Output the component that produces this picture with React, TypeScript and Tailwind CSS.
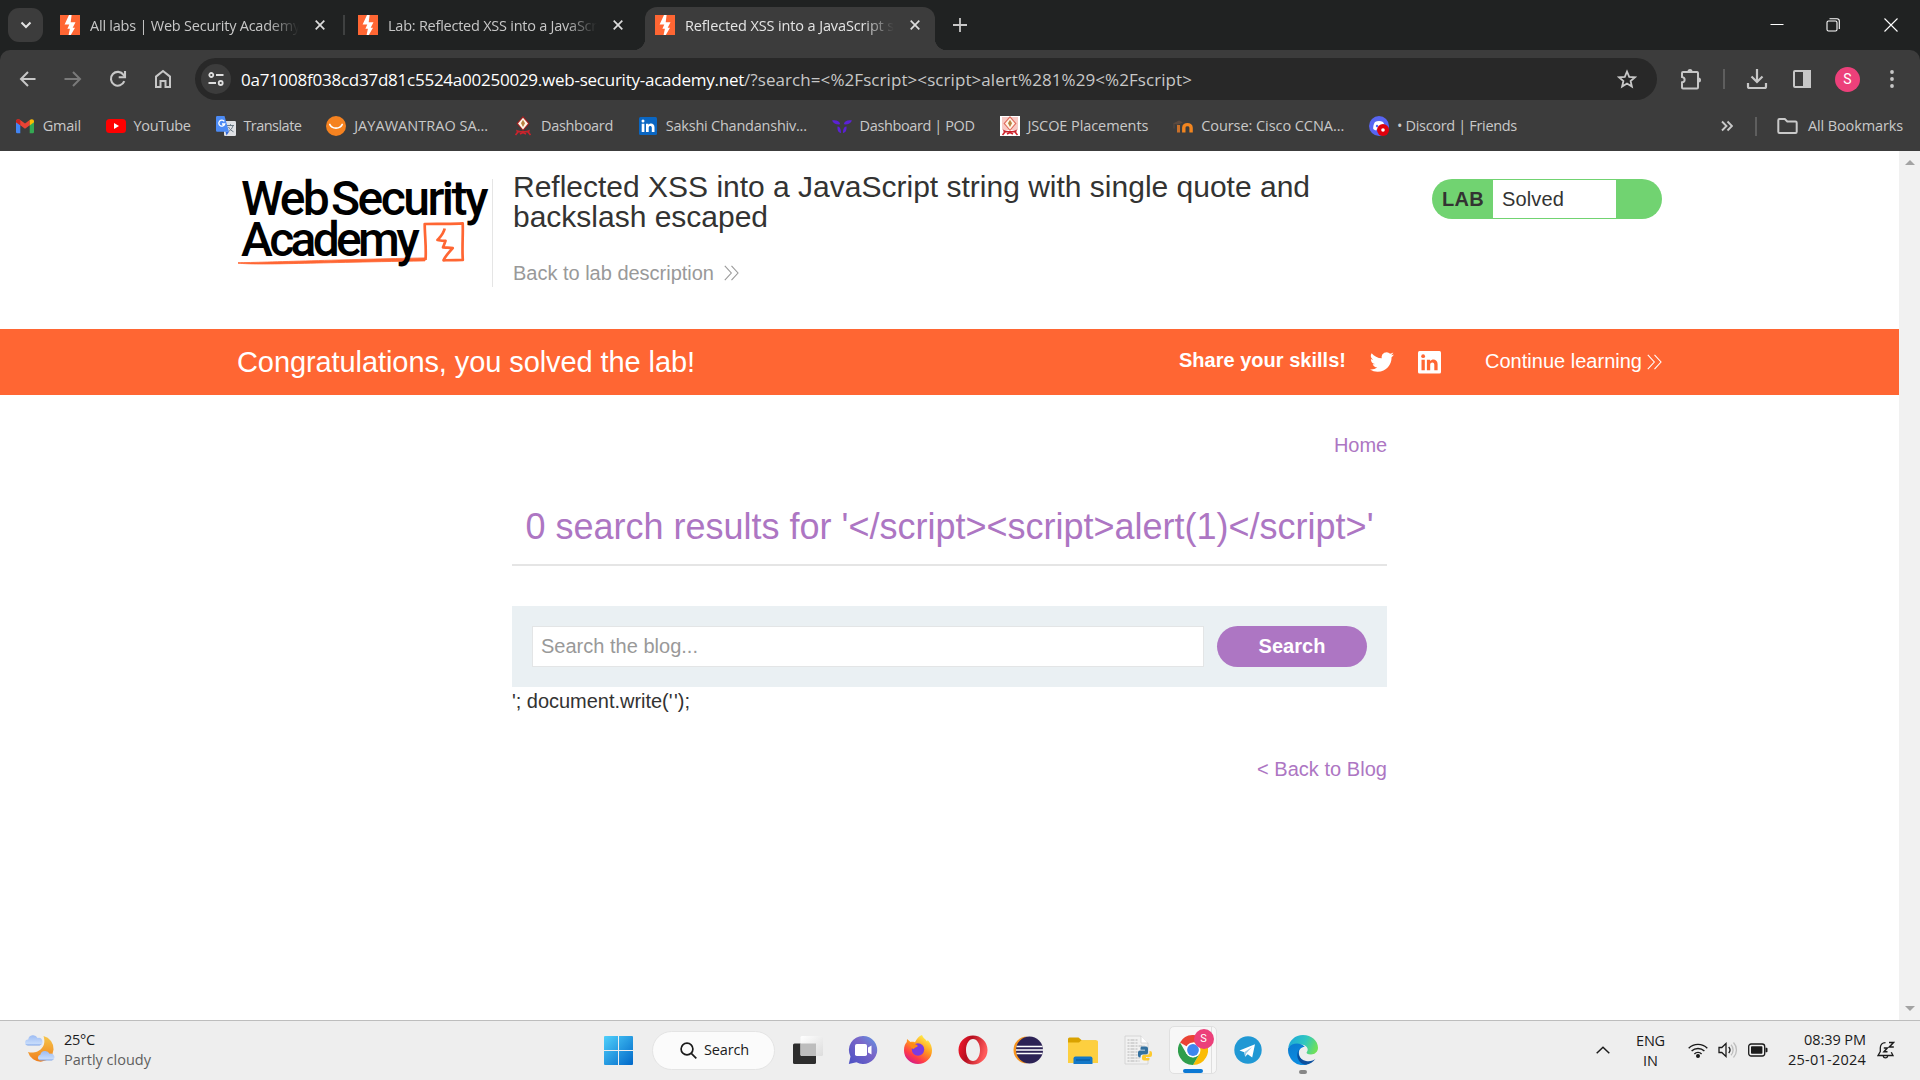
import React, { useLayoutEffect, useRef, useState } from "react";
import type { ReactNode } from "react";

/* Single-line text tracked so that it spans the given width. */
function Fit({ w, className = "", children }: { w: number; className?: string; children: ReactNode }) {
  const ref = useRef<HTMLSpanElement>(null);
  const [sp, setSp] = useState(0);
  useLayoutEffect(() => {
    const el = ref.current;
    if (!el) return;
    const n = (el.textContent || "").length;
    setSp((w - el.getBoundingClientRect().width) / n);
  }, [w]);
  return (
    <span className={"inline-block shrink-0 whitespace-nowrap " + className} style={{ width: w }}>
      <span ref={ref} className="inline-block whitespace-nowrap" style={{ letterSpacing: sp }}>
        {children}
      </span>
    </span>
  );
}

const BurpIcon = () => (
  <svg viewBox="0 0 20 20" className="size-5 shrink-0">
    <rect width="20" height="20" fill="#ff6633" />
    <path d="M9 0h2.600l-.9 7.200h4.800l-2.800 5.600H15L10.800 20H8.600l1.300-6.300H7.400L9.300 9.600H4.600z" fill="#fff" />
  </svg>
);

const Close = () => (
  <svg viewBox="0 0 10 10" className="size-[10px] shrink-0" stroke="#dcdcdc" strokeWidth="1.700">
    <path d="M.7.7 9.300 9.300M9.300.7.7 9.300" />
  </svg>
);

function Tab({ title, w, active = false }: { title: string; w: number; active?: boolean }) {
  return (
    <div className="flex h-[36px] items-center">
      <BurpIcon />
      <div
        className={
          "ml-[10px] w-[209px] overflow-hidden pt-px text-[14.5px] leading-[20px] [mask-image:linear-gradient(to_right,black_85%,transparent)] " +
          (active ? "text-[#e4e4e4]" : "text-[#c7c7c7]")
        }
      >
        <Fit w={w}>{title}</Fit>
      </div>
      <div className="ml-[16px] flex">
        <Close />
      </div>
    </div>
  );
}

function TabStrip() {
  return (
    <div className="flex h-[50px] bg-[#202222] pl-2">
      <div className="mt-2 flex h-[34px] w-[35px] items-center justify-center rounded-[11px] bg-[#3c3c3c]">
        <svg viewBox="0 0 12 8" className="h-2 w-3" fill="none" stroke="#e3e3e3" strokeWidth="2">
          <path d="M1.500 1.500 6 6l4.500-4.500" />
        </svg>
      </div>
      <div className="ml-[17px] mt-[7px]">
        <Tab title="All labs | Web Security Academy" w={210} />
      </div>
      <div className="ml-[18px] mt-[15px] h-5 w-[2px] bg-[#3f4141]" />
      <div className="ml-[13px] mt-[7px]">
        <Tab title="Lab: Reflected XSS into a JavaScript" w={226} />
      </div>
      <div className="relative ml-[22px] mt-[7px] h-[43px] w-[290px] rounded-t-[12px] bg-[#3c3c3c] pl-[10px]">
        <div className="absolute -left-3 bottom-0 size-3 bg-[radial-gradient(circle_at_0_0,transparent_12px,#3c3c3c_12.5px)]" />
        <div className="absolute -right-3 bottom-0 size-3 bg-[radial-gradient(circle_at_100%_0,transparent_12px,#3c3c3c_12.5px)]" />
        <Tab title="Reflected XSS into a JavaScript string" w={240} active />
      </div>
      <svg viewBox="0 0 14 14" className="ml-[18px] mt-[18px] size-[14px]" stroke="#c7c7c7" strokeWidth="1.800">
        <path d="M7 0v14M0 7h14" />
      </svg>
      <div className="ml-auto flex items-start pr-[22px]">
        <svg viewBox="0 0 14 14" className="mt-[18px] size-[14px]" stroke="#fff" strokeWidth="1">
          <path d="M.5 6.500h13" />
        </svg>
        <svg viewBox="0 0 14 14" className="ml-[42px] mt-[18px] size-[14px]" fill="none" stroke="#fff" strokeWidth="1.100">
          <rect x="1" y="3" width="10" height="10" rx="1.500" />
          <path d="M3.500.7H11A2.300 2.300 0 0 1 13.300 3v8" />
        </svg>
        <svg viewBox="0 0 14 14" className="ml-[44px] mt-[18px] size-[14px]" stroke="#fff" strokeWidth="1.100">
          <path d="M.5.5l13 13M13.500.5l-13 13" />
        </svg>
      </div>
    </div>
  );
}

function Toolbar() {
  return (
    <div className="flex h-[58px] items-center rounded-t-[10px] bg-[#3c3c3c] pl-[18px] text-[#c7c7c7]">
      <svg viewBox="0 0 20 20" className="size-5" fill="none" stroke="currentColor" strokeWidth="2">
        <path d="M17.500 10H3M10 3l-7 7 7 7" />
      </svg>
      <svg viewBox="0 0 20 20" className="ml-[25px] size-5 text-[#7a7a7a]" fill="none" stroke="currentColor" strokeWidth="2">
        <path d="M1.500 10h15M10 3l7 7-7 7" />
      </svg>
      <svg viewBox="0 0 20 20" className="ml-[25px] size-5" fill="none" stroke="currentColor" strokeWidth="2.100">
        <path d="M16.300 12.200A6.900 6.900 0 1 1 15.500 5.800L17 7.600" />
        <path d="M17 2v6.200h-6.300" />
      </svg>
      <svg viewBox="0 0 20 20" className="ml-[25px] size-5" fill="none" stroke="currentColor" strokeWidth="2">
        <path d="M3 18V7.600L10 2l7 5.600V18h-4.500v-6h-5v6z" />
      </svg>
      <div className="ml-[22px] flex h-[42px] w-[1462px] items-center rounded-full bg-[#282828] pl-[6px]">
        <div className="flex size-[30px] items-center justify-center rounded-full bg-[#3c3c3c]">
          <svg viewBox="0 0 16 14" className="h-[14px] w-4" fill="none" stroke="#dedede" strokeWidth="1.800">
            <circle cx="3.300" cy="3" r="2" />
            <path d="M8 3h7.500M.5 11H8" />
            <circle cx="12.700" cy="11" r="2" />
          </svg>
        </div>
        <div className="ml-[10px] flex pt-[2px] text-[17px] leading-[24px]">
          <Fit w={503} className="text-white">
            0a71008f038cd37d81c5524a00250029.web-security-academy.net
          </Fit>
          <Fit w={448}>{"/?search=<%2Fscript><script>alert%281%29<%2Fscript>"}</Fit>
        </div>
        <svg viewBox="0 0 20 20" className="ml-[425px] size-5" fill="none" stroke="currentColor" strokeWidth="1.800">
          <path d="m10 2.500 2.200 5.300 5.700.5-4.300 3.700 1.300 5.600-4.900-3-4.900 3 1.300-5.600L2.100 8.300l5.700-.5z" />
        </svg>
      </div>
      <svg viewBox="0 0 22 22" className="ml-[22px] size-[22px]" fill="none" stroke="currentColor" strokeWidth="2">
        <path d="M4 4h14a1.200 1.200 0 0 1 1 1v14.500a1 1 0 0 1-1 1H4a1 1 0 0 1-1-1v-5.200c3.500-.3 3.500-5 0-5.400V5a1 1 0 0 1 1-1z" />
        <path d="M8.500 3.500a2.500 2.500 0 0 1 5 0zM19.500 9.500a2.500 2.500 0 0 1 0 5z" fill="currentColor" stroke="none" />
      </svg>
      <div className="ml-[22px] h-5 w-[2px] bg-[#5e5e5e]" />
      <svg viewBox="0 0 22 22" className="ml-[21px] size-[22px]" fill="none" stroke="currentColor" strokeWidth="2.200">
        <path d="M11 1v12M5.500 8.500 11 14l5.500-5.500M2 15v3.500A1.500 1.500 0 0 0 3.500 20h15a1.500 1.500 0 0 0 1.500-1.500V15" />
      </svg>
      <svg viewBox="0 0 20 20" className="ml-[24px] size-5" fill="none" stroke="currentColor" strokeWidth="2">
        <rect x="2" y="2" width="16" height="16" rx="1" />
        <path d="M12 2h6v16h-6z" fill="currentColor" />
      </svg>
      <div className="ml-[23px] flex size-[25px] items-center justify-center rounded-full bg-[#ec407a] font-['Roboto'] text-[14px] text-white">
        S
      </div>
      <svg viewBox="0 0 4 20" className="ml-[30px] h-5 w-1" fill="currentColor">
        <circle cx="2" cy="3" r="1.900" />
        <circle cx="2" cy="10" r="1.900" />
        <circle cx="2" cy="17" r="1.900" />
      </svg>
    </div>
  );
}

const GmailIcon = () => (
  <svg viewBox="0 0 20 20" className="size-5">
    <path d="M1 5v11a1.200 1.200 0 0 0 1.200 1.200H5.300V9z" fill="#4285f4" />
    <path d="M19 5v11a1.200 1.200 0 0 1-1.200 1.200h-3.100V9z" fill="#34a853" />
    <path d="M1 5.500c0-2.300 2.300-3 4.300-1.500L10 7.600 14.700 4v5.300L10 12.800 5.300 9.300 1 6.200z" fill="#ea4335" />
    <path d="M14.700 4C16.700 2.500 19 3.200 19 5.500v.7l-4.300 3.200z" fill="#fbbc04" />
    <path d="M1 5.500C1 3.200 3.300 2.500 5.300 4v5.300L1 6.200z" fill="#c5221f" />
  </svg>
);
const YouTubeIcon = () => (
  <svg viewBox="0 0 20 20" className="size-5">
    <rect y="3" width="20" height="14" rx="3.500" fill="#f00" />
    <path d="m8 7 5 3-5 3z" fill="#fff" />
  </svg>
);
const TranslateIcon = () => (
  <svg viewBox="0 0 20 20" className="size-5">
    <rect x="8" y="5" width="12" height="15" rx="1.200" fill="#dfe1e5" />
    <path d="M11 9.500h7M14.500 8.200v1.300M17 9.500c-.5 3-3 5-4.500 6M12.500 11c1 2 3 3.800 5 4.800" fill="none" stroke="#6b7a85" strokeWidth="1" />
    <path d="M1.200 0h7.300l4.500 15.700H1.200A1.200 1.200 0 0 1 0 14.500V1.200A1.200 1.200 0 0 1 1.200 0z" fill="#4c8bf5" />
    <path d="m9.500 15.700 3.500 0-2.500 3.800z" fill="#3367d6" />
    <path d="M8.300 5.400A3 3 0 1 0 8.700 8H6" fill="none" stroke="#fff" strokeWidth="1.300" />
  </svg>
);
const SmileIcon = () => (
  <svg viewBox="0 0 20 20" className="size-5">
    <circle cx="10" cy="10" r="10" fill="#f58220" />
    <path d="M3.800 8.500c2 4.800 10.400 4.800 12.400 0" fill="none" stroke="#fff" strokeWidth="1.700" strokeLinecap="round" />
  </svg>
);
const CrestIcon = ({ boxed = false }: { boxed?: boolean }) => (
  <svg viewBox="0 0 20 20" className="size-5">
    {boxed && <rect width="20" height="20" fill="#fff" />}
    {boxed && <path d="M2 1h16v13H2z" fill="#f8c9c4" />}
    <path d="m10 0 6.500 7.500L10 15 3.500 7.500z" fill={boxed ? "#e06a5c" : "#a32020"} />
    <path d="m10 1.800 5 5.700-5 6-5-6z" fill="#fff6e8" />
    <path d="m10 3.800 2 3.400L10 11 8 7.200z" fill="#b98242" />
    <path d="M3 13.500c4 2 10 2 14 0l-.8 3H3.800z" fill="#c8232c" />
    <path d="m5 16-2.500 3M15 16l2.500 3M7 18l3-1.500 3 1.500" stroke="#d0232c" strokeWidth="1.600" fill="none" />
  </svg>
);
const LinkedInIcon = () => (
  <svg viewBox="0 0 20 20" className="size-5">
    <rect x="1" y="1" width="18" height="18" rx="1.500" fill="#0a66c2" />
    <path d="M3.700 7.800h2.700V16H3.700zM8 7.800h2.500v1.200c1.500-2.400 6-1.800 6 2.200V16h-2.700v-4.200c0-2.600-3.100-2.300-3.100 0V16H8z" fill="#fff" />
    <circle cx="5" cy="5.100" r="1.500" fill="#fff" />
  </svg>
);
const PodIcon = () => (
  <svg viewBox="0 0 20 20" className="size-5" fill="#5b21d6">
    <path d="M0 4.500c4-.8 7.500.3 8.300 3.800-4 .5-6.800-.8-8.300-3.800zM20 4.500c-4-.8-7.500.3-8.300 3.800 4 .5 6.800-.8 8.300-3.800z" />
    <path d="M5.500 10.500c2 0 3.500 2 3.500 6.500-2.800-.3-3.800-3-3.500-6.500zM14.500 10.500c-2 0-3.500 2-3.500 6.500 2.800-.3 3.800-3 3.500-6.500z" />
  </svg>
);
const MoodleIcon = () => (
  <svg viewBox="0 0 20 20" className="size-5" fill="none">
    <path d="M5.500 16.500V9" stroke="#c9702a" strokeWidth="3" />
    <path d="M10.800 16.500v-4.700c0-4.200 7.300-4.200 7.300 0v4.700" stroke="#f2851f" strokeWidth="3.400" />
    <path d="M0 7.500 6 4.500l4 2-5.500 2.300z" fill="#5b4a40" />
    <path d="M1 7.500v5" stroke="#5b4a40" />
  </svg>
);
const DiscordIcon = () => (
  <svg viewBox="0 0 20 20" className="size-5">
    <circle cx="10" cy="10" r="10" fill="#5865f2" />
    <path d="M6 6c2.500-1.300 5.500-1.300 8 0 1.300 2 2 4.500 1.800 7-1 .8-2 1.200-3 1.500l-.7-1.200H7.900l-.7 1.200c-1-.3-2-.7-3-1.500C4 10.500 4.700 8 6 6z" fill="#fff" />
    <circle cx="8" cy="10" r="1.200" fill="#5865f2" />
    <circle cx="14" cy="14" r="6" fill="#e0000b" />
    <circle cx="14" cy="14" r="1.800" fill="#fff" />
  </svg>
);

const bookmarks: { icon: ReactNode; label: string; w: number }[] = [
  { icon: <GmailIcon />, label: "Gmail", w: 38 },
  { icon: <YouTubeIcon />, label: "YouTube", w: 57 },
  { icon: <TranslateIcon />, label: "Translate", w: 58 },
  { icon: <SmileIcon />, label: "JAYAWANTRAO SA...", w: 134 },
  { icon: <CrestIcon />, label: "Dashboard", w: 72 },
  { icon: <LinkedInIcon />, label: "Sakshi Chandanshiv...", w: 141 },
  { icon: <PodIcon />, label: "Dashboard | POD", w: 115 },
  { icon: <CrestIcon boxed />, label: "JSCOE Placements", w: 121 },
  { icon: <MoodleIcon />, label: "Course: Cisco CCNA...", w: 143 },
  { icon: <DiscordIcon />, label: "• Discord | Friends", w: 120 },
];

function BookmarkBar() {
  return (
    <div className="flex h-[43px] items-center bg-[#3c3c3c] pb-[7px] pl-[15px] text-[14.5px] leading-[20px] text-[#c9c9c9]">
      <div className="flex gap-[25px]">
        {bookmarks.map((b, i) => (
          <div key={i} className="flex shrink-0 items-center gap-[7.8px]">
            {b.icon}
            <Fit w={b.w}>{b.label}</Fit>
          </div>
        ))}
      </div>
      <div className="ml-auto flex items-center pr-[17px]">
        <svg viewBox="0 0 12 12" className="size-3" fill="none" stroke="currentColor" strokeWidth="1.900">
          <path d="m1 1.500 4.500 4.500L1 10.500M6.500 1.500 11 6l-4.500 4.500" />
        </svg>
        <div className="ml-[22px] h-[19px] w-[2px] bg-[#5e5e5e]" />
        <svg viewBox="0 0 21 18" className="ml-5 h-[18px] w-[21px]" fill="none" stroke="currentColor" strokeWidth="2">
          <path d="M2.500 2h5.300l2.500 2.500h8.200a1.200 1.200 0 0 1 1.200 1.200v9.100a1.200 1.200 0 0 1-1.200 1.200h-16a1.200 1.200 0 0 1-1.200-1.200V3.200A1.200 1.200 0 0 1 2.500 2z" />
        </svg>
        <Fit w={95} className="ml-[10px]">
          All Bookmarks
        </Fit>
      </div>
    </div>
  );
}

const Chevrons = ({ className }: { className: string }) => (
  <svg viewBox="0 0 15 16" className={"h-4 w-[15px] shrink-0 " + className} fill="none" stroke="currentColor" strokeWidth="1.100">
    <path d="M.8.8 7.300 8 .8 15.200M7.500.8 14 8l-6.500 7.200" />
  </svg>
);

function Logo() {
  return (
    <div className="relative h-[108px] w-[255px] border-r border-[#e5e5e5] pl-[3px] font-['Roboto'] text-[48px] font-medium leading-[39px] text-black">
      <svg viewBox="0 0 255 108" className="absolute left-0 top-0 h-[108px] w-[255px]" fill="none" stroke="#ff6633">
        <path d="M0 84.200c25 2 60-.3 187-2.300l.3-3c-80 1.500-160 4.500-187.300 4.800z" fill="#ff6633" strokeWidth="0.800" />
        <path d="M187.500 81c1-12-.8-25-.8-36 12-.5 26 .3 38-.6.5 11-.8 24 .1 36.500-6.300.2-13.300.3-19.300.4 1.500-4 5.500-7.800 9.200-12.200-3-1-7.200-.3-9.700-.7 1-2.300 1.800-4.400 2.500-6.500-3.500.1-5.700-.5-8-.9 3-3.400 6-6 7.200-11.500" strokeWidth="2.700" strokeLinejoin="round" />
      </svg>
      <div className="relative flex h-[41px]">
        <Fit w={86}>Web</Fit>
        <Fit w={155} className="ml-[4px]">
          Security
        </Fit>
      </div>
      <div className="relative flex h-[39px]">
        <Fit w={175}>Academy</Fit>
      </div>
    </div>
  );
}

function LabHeader() {
  return (
    <div className="flex h-[178px] pl-[238px] pt-[28px]">
      <Logo />
      <div className="-mt-[7px] ml-5 w-[819px] text-[30px] leading-[30px] text-[#333332]">
        <Fit w={797}>Reflected XSS into a JavaScript string with single quote and</Fit>
        <Fit w={255}>backslash escaped</Fit>
        <div className="mt-[29px] flex items-center text-[20px] leading-[24px] text-[#999]">
          <Fit w={201}>Back to lab description</Fit>
          <Chevrons className="ml-[10px]" />
        </div>
      </div>
      <div className="ml-[100px] flex h-10 w-[230px] overflow-hidden rounded-[20px] bg-[#71d371] py-px text-[20px] leading-[38px] text-[#333332]">
        <div className="w-[61px] pl-[10px] font-bold">
          <Fit w={42}>LAB</Fit>
        </div>
        <div className="w-[123px] bg-white pl-[9px]">
          <Fit w={62}>Solved</Fit>
        </div>
      </div>
    </div>
  );
}

function Banner() {
  return (
    <div className="flex h-[66px] items-center bg-[#ff6633] pl-[237px] text-[20px] leading-[24px] text-white">
      <Fit w={458} className="text-[29px] leading-[32px]">
        Congratulations, you solved the lab!
      </Fit>
      <Fit w={167} className="-mt-[4px] ml-[484px] font-bold">
        Share your skills!
      </Fit>
      <svg viewBox="0 0 24 24" className="ml-[24px] size-6" fill="#fff">
        <path d="M23.950 4.570a10 10 0 0 1-2.820.77 4.960 4.960 0 0 0 2.160-2.720c-.95.56-2 .96-3.130 1.190a4.920 4.920 0 0 0-8.380 4.480C7.690 8.100 4.070 6.130 1.640 3.160a4.920 4.920 0 0 0 1.520 6.570 4.900 4.900 0 0 1-2.230-.61v.06a4.920 4.920 0 0 0 3.950 4.830 5 5 0 0 1-2.210.08 4.940 4.940 0 0 0 4.600 3.420A9.870 9.870 0 0 1 0 19.540a14 14 0 0 0 7.550 2.210c9.050 0 14-7.500 14-13.980 0-.21 0-.42-.02-.63a9.940 9.940 0 0 0 2.420-2.570z" />
      </svg>
      <svg viewBox="0 0 23 23" className="ml-[24px] size-[23px]">
        <rect width="23" height="22.500" rx="1.500" fill="#fff" />
        <path d="M3.500 8.700h3.300v10.500H3.500zM8.900 8.700h3.200v1.400c2-2.800 7.500-2.200 7.500 3v6.100h-3.300v-5.400c0-3.400-4.100-3-4.100 0v5.400H8.900z" fill="#ff6633" />
        <circle cx="5.150" cy="5.200" r="1.900" fill="#ff6633" />
      </svg>
      <Fit w={157} className="-mt-[2px] ml-[44px]">
        Continue learning
      </Fit>
      <Chevrons className="ml-[5px]" />
    </div>
  );
}

function Blog() {
  return (
    <div className="ml-[512px] mt-[38px] flex w-[875px] flex-col text-[20px] leading-[24px]">
      <Fit w={53} className="self-end text-[#ad76c3]">
        Home
      </Fit>
      <div className="mt-[47px] flex h-[62px] justify-center border-b-2 border-[#e5e5e5] pt-px text-[36px] leading-[44px] text-[#ad76c3]">
        <Fit w={848}>{"0 search results for '</script><script>alert(1)</script>'"}</Fit>
      </div>
      <div className="mt-[40px] flex h-[81px] bg-[#eaf0f3] px-5 pt-5">
        <div className="h-[41px] w-[672px] border border-[#e3e5e6] bg-white pl-2 leading-[39px] text-[#999]">
          <Fit w={157}>Search the blog...</Fit>
        </div>
        <div className="ml-[13px] h-[41px] w-[150px] rounded-full bg-[#ad76c3] text-center font-bold leading-[41px] text-white">
          <Fit w={67}>Search</Fit>
        </div>
      </div>
      <Fit w={178} className="mt-[2px] text-[#333332]">
        {"'; document.write('"}
        <span className="ml-[1.5px]">{"');"}</span>
      </Fit>
      <Fit w={130} className="mt-[44px] self-end text-[#ad76c3]">{"< Back to Blog"}</Fit>
    </div>
  );
}

function Page() {
  return (
    <div className="flex h-[869px] bg-white font-['Liberation_Sans',Arial,sans-serif]">
      <div className="w-[1899px]">
        <LabHeader />
        <Banner />
        <Blog />
      </div>
      <div className="flex w-[21px] flex-col items-center justify-between bg-[#f1f1f1] py-[9px]">
        <div className="border-x-[5px] border-b-[5px] border-x-transparent border-b-[#a3a3a3]" />
        <div className="border-x-[5px] border-t-[5px] border-x-transparent border-t-[#a3a3a3]" />
      </div>
    </div>
  );
}

const WeatherIcon = () => (
  <svg viewBox="0 0 30 30" className="size-[30px]">
    <defs>
      <linearGradient id="moon" x1="0" y1="0" x2="0" y2="1">
        <stop offset="0" stopColor="#f6c64a" />
        <stop offset="1" stopColor="#f07f1c" />
      </linearGradient>
      <linearGradient id="cloud" x1="0" y1="0" x2="0" y2="1">
        <stop offset="0" stopColor="#9dbcf3" />
        <stop offset="0.800" stopColor="#c6dbfb" />
        <stop offset="1" stopColor="#7fa5e8" />
      </linearGradient>
    </defs>
    <path d="M18.500 3A13 13 0 1 1 3 19c9 2.500 19.500-4 15.500-16z" fill="url(#moon)" />
    <path d="M3 12.500a3 3 0 0 1 .2-6A5 5 0 0 1 12.600 5a3.800 3.800 0 0 1 2 7.500z" fill="url(#cloud)" />
    <path d="M15 27.500a3 3 0 0 1 .3-5.800 5 5 0 0 1 9.300-1 3.500 3.500 0 0 1 2.400 6.800z" fill="url(#cloud)" />
  </svg>
);

const WindowsIcon = () => (
  <svg viewBox="0 0 29 29" className="size-[29px]">
    <defs>
      <linearGradient id="win" x1="0" y1="0" x2="1" y2="1">
        <stop offset="0" stopColor="#4fd0fb" />
        <stop offset="1" stopColor="#0067c8" />
      </linearGradient>
    </defs>
    <path d="M1 0h13v14H0V1a1 1 0 0 1 1-1zM15 0h13a1 1 0 0 1 1 1v13H15zM0 15h14v14H1a1 1 0 0 1-1-1zM15 15h14v13a1 1 0 0 1-1 1H15z" fill="url(#win)" />
  </svg>
);

const TaskViewIcon = () => (
  <svg viewBox="0 0 30 30" className="size-[30px]">
    <defs>
      <linearGradient id="tv" x1="0" y1="0" x2="1" y2="1">
        <stop offset="0" stopColor="#fff" />
        <stop offset="1" stopColor="#dcdcdc" />
      </linearGradient>
    </defs>
    <rect x="0" y="8.500" width="23" height="20.500" rx="1.500" fill="#2d2d2d" />
    <rect x="7.500" y="1" width="22.500" height="20" rx="1.500" fill="url(#tv)" />
    <path d="M7.500 8.500H23V21H9a1.500 1.500 0 0 1-1.500-1.500z" fill="#bdbdbd" />
  </svg>
);

const ChatIcon = () => (
  <svg viewBox="0 0 30 30" className="size-[30px]">
    <defs>
      <linearGradient id="chat" x1="1" y1="0" x2="0" y2="1">
        <stop offset="0" stopColor="#5f9be6" />
        <stop offset="0.400" stopColor="#7a66c8" />
        <stop offset="1" stopColor="#4b50c4" />
      </linearGradient>
    </defs>
    <path d="M15 1a14 14 0 1 1-6.500 26.300L.8 29l1.700-7.500A14 14 0 0 1 15 1z" fill="url(#chat)" />
    <rect x="7" y="9" width="12" height="12" rx="1.800" fill="#fff" />
    <path d="m20 12.500 3.500-2v9L20 17.500z" fill="#fff" />
  </svg>
);

const FirefoxIcon = () => (
  <svg viewBox="0 0 30 30" className="size-[30px]">
    <defs>
      <linearGradient id="ff" x1="0.850" y1="0.100" x2="0.300" y2="1">
        <stop offset="0" stopColor="#fff04a" />
        <stop offset="0.400" stopColor="#ff9a1f" />
        <stop offset="0.750" stopColor="#ff3b47" />
        <stop offset="1" stopColor="#d41a8a" />
      </linearGradient>
    </defs>
    <path d="M19 0c1 3 3.500 4 5 6.500l.8-1.500C28 8.500 29 12 29 15.500a14 13.500 0 0 1-28 0c0-4.500 1.200-6.500 2.800-8.500L4 4l3.500 3c1.500-.3 3-.2 4.500.3C13.500 4 16 1 19 0z" fill="url(#ff)" />
    <circle cx="15" cy="14.500" r="6.200" fill="#7b3be0" />
    <path d="M7 8c3.500-.3 6 1.200 8 3-1.700 1.800-3.500 1.500-4.500 3-2-.5-4-3-3.500-6z" fill="#ff8a16" />
  </svg>
);

const OperaIcon = () => (
  <svg viewBox="0 0 30 30" className="size-[30px]">
    <defs>
      <linearGradient id="op" x1="0" y1="0" x2="1" y2="0.300">
        <stop offset="0" stopColor="#ff1b2d" />
        <stop offset="0.450" stopColor="#b50f20" />
        <stop offset="1" stopColor="#ff5a5a" />
      </linearGradient>
    </defs>
    <path fillRule="evenodd" d="M15 .5a14.500 14.500 0 1 0 0 29 14.500 14.500 0 0 0 0-29zM15 4c3.900 0 7 4.900 7 11s-3.100 11-7 11-7-4.900-7-11S11.100 4 15 4z" fill="url(#op)" />
  </svg>
);

const EclipseIcon = () => (
  <svg viewBox="0 0 30 30" className="size-[30px]">
    <path d="M14 1.500a13.500 13.500 0 0 0 0 27C9 26 6 21 6 15S9 4 14 1.500z" fill="#f7941e" />
    <circle cx="16.500" cy="15" r="13.500" fill="#2c2255" />
    <path d="M3.500 11.500h26M3 15h27M3.500 18.500h26" stroke="#fff" strokeWidth="1.700" />
  </svg>
);

const FolderIcon = () => (
  <svg viewBox="0 0 30 30" className="size-[30px]">
    <path d="M0 4a1.500 1.500 0 0 1 1.500-1.500h9L14 5.500h14v6H0z" fill="#d9a200" />
    <path d="M0 7.500h11l2.500-2.300H28.500A1.500 1.500 0 0 1 30 6.700V28H0z" fill="#fdcf3f" />
    <path d="M5.500 29v-5.500a2 2 0 0 1 2-2h15a2 2 0 0 1 2 2V29z" fill="#1378c8" />
    <path d="M8 25h14" stroke="#0a5a9c" strokeWidth="1.200" />
  </svg>
);

const PythonFileIcon = () => (
  <svg viewBox="0 0 30 30" className="size-[30px]">
    <path d="M2 1h16l7 7v21H2z" fill="#f1f1f1" stroke="#cfcfcf" strokeWidth="0.800" />
    <path d="M18 1v7h7" fill="#fff" stroke="#cfcfcf" strokeWidth="0.800" />
    <path d="M4.500 5h11M4.500 8h11M4.500 11h17M4.500 14h11M4.500 17h10M4.500 20h10M4.500 23h12M4.500 26h12" stroke="#b5b5b5" strokeWidth="1" strokeDasharray="2 1 4 1" />
    <path d="M19 11.500h4a2 2 0 0 1 2 2v4a2 2 0 0 1-2 2h-3.500a2 2 0 0 0-2 2v1H17a2 2 0 0 1-2-2v-3a2 2 0 0 1 2-2h5v-.7h-4.500v-1.600c0-1 .7-1.700 1.500-1.700z" fill="#33709f" />
    <path d="M25 25.500h-4a2 2 0 0 1-2-2v-1.700a2 2 0 0 1 2-2h3.500a2 2 0 0 0 2-2V16h.5a2 2 0 0 1 2 2v2a2 2 0 0 1-2 2h-4v1h3.500v1a1.500 1.500 0 0 1-1.500 1.500z" fill="#fdc92e" />
  </svg>
);

const ChromeIcon = () => (
  <svg viewBox="0 0 30 30" className="size-[30px]">
    <path d="M15 15 2 7.500A15 15 0 0 1 28 7.500H15z" fill="#ea4335" />
    <path d="M28 7.500A15 15 0 0 1 15 30l6.500-11.200L15 7.500z" fill="#fbbc05" />
    <path d="M15 30A15 15 0 0 1 2 7.500l6.500 11.300L15 22.500l6.500-3.700z" fill="#2f9e4c" />
    <circle cx="15" cy="15" r="7.500" fill="#fff" />
    <circle cx="15" cy="15" r="5.900" fill="#3f86f0" />
  </svg>
);

const TelegramIcon = () => (
  <svg viewBox="0 0 30 30" className="size-[30px]">
    <circle cx="15" cy="15" r="13.700" fill="#2098d4" />
    <path d="m6.500 15.500 15.500-6.200-2.800 13.200-4.500-3.200-2.600 2.500-.8-4.500z" fill="#fff" />
    <path d="m11.500 17 7.500-5-5.700 6.300-.9 3.200z" fill="#9ccbe6" />
  </svg>
);

const EdgeIcon = () => (
  <svg viewBox="0 0 30 30" className="size-[30px]">
    <defs>
      <linearGradient id="ed1" x1="0" y1="0.200" x2="1" y2="0.500">
        <stop offset="0" stopColor="#1da7dc" />
        <stop offset="0.550" stopColor="#2fc7c0" />
        <stop offset="1" stopColor="#6fe05a" />
      </linearGradient>
      <linearGradient id="ed2" x1="0" y1="0" x2="0.400" y2="1">
        <stop offset="0" stopColor="#0b7bd0" />
        <stop offset="1" stopColor="#0c8ce0" />
      </linearGradient>
    </defs>
    <path d="M.3 12.500C1.300 5.500 7 0 15 0c8.500 0 15 5.800 15 12.800 0 4-3.200 6.700-7 6.700-3.500 0-5-1.200-4.300-2.300 2.800-3-.3-7.700-5.700-7.700-5 0-10 1-12.700 3z" fill="url(#ed1)" />
    <path d="M.2 13C3 8.800 8.500 7.800 13 9.200c2 .7 3 1.800 3.700 2.700-6.200-.2-8.500 8-1.500 14.500 1.500 1.300 2.500 2.400 4 3.100A15 15 0 0 1 .2 13z" fill="url(#ed2)" />
    <path d="M12 13.500c-3.500 4-1 11 6 12.500 4.500.9 7.500-.7 9.500-2.300a14.500 14.500 0 0 1-9.500 6C10 29 6.500 19 12 13.500z" fill="#0b4f9e" />
  </svg>
);

const apps: ReactNode[] = [
  <TaskViewIcon />,
  <ChatIcon />,
  <FirefoxIcon />,
  <OperaIcon />,
  <EclipseIcon />,
  <FolderIcon />,
  <PythonFileIcon />,
  <div className="relative flex h-[48px] w-[48px] items-center justify-center rounded-[5px] border border-[#e0e0e0] bg-[#f7f7f7]">
    <div className="absolute inset-y-0 right-[4px] w-px bg-[#dedede]" />
    <ChromeIcon />
    <div className="absolute right-[2px] top-[2px] flex size-5 items-center justify-center rounded-full bg-[#ec407a] font-['Roboto'] text-[11px] text-white">
      S
    </div>
    <div className="absolute bottom-0 left-[13px] h-1 w-5 rounded-full bg-[#0b78d4]" />
  </div>,
  <TelegramIcon />,
  <div className="relative">
    <EdgeIcon />
    <div className="absolute -bottom-[9px] left-[11px] h-1 w-2 rounded-full bg-[#868686]" />
  </div>,
];

function Taskbar() {
  return (
    <div className="flex h-[60px] items-center border-t border-[#bdbdbd] bg-[#eee] pb-px text-[14.5px] leading-[20px] text-[#1b1b1b]">
      <div className="flex w-[604px] items-center pl-[25px]">
        <div className="-mt-1">
          <WeatherIcon />
        </div>
        <div className="-mt-px ml-[9px] flex flex-col">
          <Fit w={31}>25°C</Fit>
          <Fit w={87} className="text-[#5f5f5f]">
            Partly cloudy
          </Fit>
        </div>
      </div>
      <WindowsIcon />
      <div className="ml-[19px] flex h-[39px] w-[123px] items-center rounded-full border border-[#e4e4e4] bg-[#fbfbfb] pl-[27px]">
        <svg viewBox="0 0 17 17" className="size-[17px]" fill="none" stroke="#1b1b1b" strokeWidth="1.700">
          <circle cx="7" cy="7" r="5.900" />
          <path d="m11.300 11.300 5 5" />
        </svg>
        <Fit w={45} className="ml-[7px]">
          Search
        </Fit>
      </div>
      <div className="ml-[5px] flex">
        {apps.map((a, i) => (
          <div key={i} className="flex h-[48px] w-[55px] items-center justify-center">
            {a}
          </div>
        ))}
      </div>
      <div className="ml-auto flex items-center pr-[25px]">
        <svg viewBox="0 0 14 8" className="h-2 w-[14px]" fill="none" stroke="#1b1b1b" strokeWidth="1.500">
          <path d="m.7 7.300 6.300-6 6.300 6" />
        </svg>
        <div className="ml-[26px] flex flex-col items-center pt-px">
          <Fit w={29}>ENG</Fit>
          <Fit w={15}>IN</Fit>
        </div>
        <svg viewBox="0 0 20 16" className="ml-[23px] h-4 w-5" fill="none" stroke="#1b1b1b" strokeWidth="1.400">
          <path d="M.7 6.200a13.200 13.200 0 0 1 18.600 0M3.600 9.100a9.100 9.100 0 0 1 12.800 0M6.400 11.900a5.100 5.100 0 0 1 7.200 0" />
          <circle cx="10" cy="14" r="1.300" fill="#1b1b1b" />
        </svg>
        <svg viewBox="0 0 20 18" className="ml-[10px] h-[18px] w-5" fill="none" stroke="#1b1b1b" strokeWidth="1.300">
          <path d="M1 6.500h2.800L8 2.500v13l-4.200-4H1zM10.700 6a4.500 4.500 0 0 1 0 6" />
          <path d="M13 3.800a7.500 7.500 0 0 1 0 10.400M15.500 1.500a11 11 0 0 1 0 15" stroke="#bdbdbd" />
        </svg>
        <svg viewBox="0 0 20 14" className="ml-[10px] h-[14px] w-5" fill="none" stroke="#1b1b1b" strokeWidth="1.300">
          <rect x=".7" y="1" width="16" height="12" rx="2.500" />
          <rect x="3" y="3.300" width="11.400" height="7.400" rx="0.800" fill="#1b1b1b" stroke="none" />
          <path d="M17.500 4.800h1.200a1 1 0 0 1 .8 1v2.400a1 1 0 0 1-.8 1h-1.200z" fill="#1b1b1b" stroke="none" />
        </svg>
        <div className="-mt-px ml-[20px] flex flex-col items-end">
          <Fit w={62}>08:39 PM</Fit>
          <Fit w={78}>25-01-2024</Fit>
        </div>
        <svg viewBox="0 0 18 18" className="ml-[11px] size-[18px]" fill="none" stroke="#1b1b1b" strokeWidth="1.300">
          <path d="M8.500 1.600C5 1.600 3.300 4 3.300 7v3.500L1 14.500h15l-1.700-3.300M6.200 15.200c.5 2.300 4 2.300 4.500 0" />
          <path d="M12 1.500h4.500L12.300 6h4.500M6.800 7h3.500L7 10.700h3.500" strokeWidth="1.500" />
        </svg>
      </div>
    </div>
  );
}

export default function App() {
  return (
    <div className="h-[1080px] w-[1920px] overflow-hidden bg-[#202222] font-['Open_Sans','Noto_Sans',sans-serif]">
      <TabStrip />
      <Toolbar />
      <BookmarkBar />
      <Page />
      <Taskbar />
    </div>
  );
}
